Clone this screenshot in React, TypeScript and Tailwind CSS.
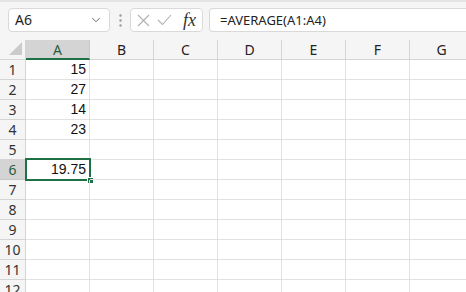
import React from 'react';
import { ChevronDown } from 'lucide-react';

const columns = ['A', 'B', 'C', 'D', 'E', 'F', 'G'];
const values: Record<number, string> = { 1: '15', 2: '27', 3: '14', 4: '23', 6: '19.75' };
const rows = Array.from({ length: 12 }, (_, i) => i + 1);

const App: React.FC = () => {
  return (
    <div
      className="w-[466px] h-[292px] overflow-hidden bg-white select-none"
      style={{ fontFamily: '"Noto Sans", "Open Sans", sans-serif' }}
    >
      {/* ribbon edge */}
      <div className="h-[2px] bg-[#e4e4e4]" />

      {/* formula bar */}
      <div className="h-[38px] bg-[#f5f5f5] flex items-start pt-[6px] pl-[8px]">
        <div className="w-[102px] h-[24px] rounded-[4px] border border-[#d9d9d9] bg-white flex items-center justify-between pl-[6px] pr-[6px]">
          <span className="text-[14px] text-[#222] leading-none">A6</span>
          <ChevronDown size={14} strokeWidth={1.5} className="text-[#555]" />
        </div>
        <div className="w-[20px] h-[24px] flex items-center justify-center">
          <svg width="3" height="13" viewBox="0 0 3 13">
            <circle cx="1.5" cy="1.5" r="1.2" fill="#9b9b9b" />
            <circle cx="1.5" cy="6.5" r="1.2" fill="#9b9b9b" />
            <circle cx="1.5" cy="11.5" r="1.2" fill="#9b9b9b" />
          </svg>
        </div>
        <div className="w-[73px] h-[24px] rounded-[4px] border border-[#d9d9d9] bg-white flex items-center pl-[6px]">
          {/* cancel */}
          <svg width="13" height="13" viewBox="0 0 13 13" className="text-[#b0b0b0]">
            <path d="M1 1L12 12M12 1L1 12" stroke="currentColor" strokeWidth="1.1" fill="none" />
          </svg>
          {/* enter */}
          <svg width="15" height="12" viewBox="0 0 15 12" className="ml-[7px] text-[#b0b0b0]">
            <path d="M1 6L5.5 10.5L14 1" stroke="currentColor" strokeWidth="1.1" fill="none" />
          </svg>
          <span
            className="ml-[11px] text-[18px] italic text-[#333] leading-none"
            style={{ fontFamily: '"Liberation Serif", "DejaVu Serif", serif' }}
          >
            fx
          </span>
        </div>
        <div className="ml-[6px] flex-1 h-[24px] rounded-l-[4px] border border-r-0 border-[#d9d9d9] bg-white flex items-center pl-[10px]">
          <span className="text-[13px] text-[#222] leading-none">=AVERAGE(A1:A4)</span>
        </div>
      </div>

      {/* grid */}
      <div className="flex flex-col">
        {/* column headers */}
        <div className="flex h-[20px]">
          <div className="w-[26px] shrink-0 h-full bg-[#f5f5f5] border-r border-b border-[#d4d4d4] flex items-end justify-end">
            <svg width="14" height="14" viewBox="0 0 14 14" className="mb-[3px] mr-[2px]">
              <polygon points="13,0 13,13 0,13" fill="#cbcbcb" />
            </svg>
          </div>
          {columns.map((c) =>
            c === 'A' ? (
              <div
                key={c}
                className="w-[64px] shrink-0 h-full bg-[#d4d4d4] border-r border-[#c8c8c8] border-b-2 border-b-[#1e7145] flex items-center justify-center text-[14px] text-[#2a5d3e]"
              >
                {c}
              </div>
            ) : (
              <div
                key={c}
                className="w-[64px] shrink-0 h-full bg-[#f5f5f5] border-r border-b border-[#d4d4d4] flex items-center justify-center text-[14px] text-[#222]"
              >
                {c}
              </div>
            )
          )}
        </div>

        {rows.map((r) => (
          <div key={r} className="flex h-[20px]">
            <div
              className={
                r === 6
                  ? 'w-[26px] shrink-0 h-full bg-[#d4d4d4] border-r border-b border-[#c8c8c8] flex items-center justify-center text-[14px] text-[#2a5d3e]'
                  : 'w-[26px] shrink-0 h-full bg-[#f5f5f5] border-r border-b border-[#d4d4d4] flex items-center justify-center text-[14px] text-[#333]'
              }
            >
              {r}
            </div>
            {columns.map((c) => (
              <div
                key={c}
                className="relative w-[64px] shrink-0 h-full border-r border-b border-[#e1e1e1] flex items-center justify-end pr-[3px] text-[14px] text-[#111]"
                style={{ fontFamily: '"Liberation Sans", Arial, sans-serif' }}
              >
                {c === 'A' ? values[r] ?? '' : ''}
                {c === 'A' && r === 6 && (
                  <>
                    <div className="absolute -left-[1px] -top-[2px] -right-[2px] -bottom-[2px] border-2 border-[#1e7145]" />
                    <div className="absolute -right-[5px] -bottom-[5px] w-[7px] h-[7px] bg-[#1e7145] border border-white" />
                  </>
                )}
              </div>
            ))}
          </div>
        ))}
      </div>
    </div>
  );
};

export default App;
